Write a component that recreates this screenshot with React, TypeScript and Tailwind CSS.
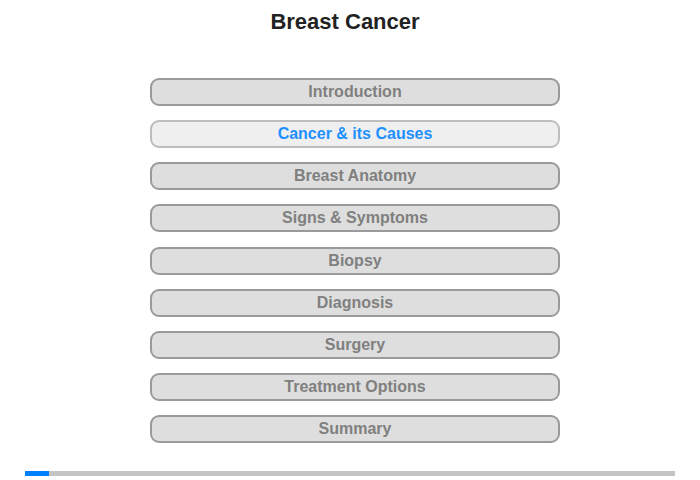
const topics = [
  "Introduction",
  "Cancer & its Causes",
  "Breast Anatomy",
  "Signs & Symptoms",
  "Biopsy",
  "Diagnosis",
  "Surgery",
  "Treatment Options",
  "Summary",
];

const active = 1;

export default function App() {
  return (
    <div
      className="w-[700px] h-[480px] bg-white flex flex-col items-center"
      style={{ fontFamily: '"Liberation Sans", Arial, sans-serif' }}
    >
      <h1 className="pt-[9px] pr-[10px] text-[22px] leading-[25px] font-bold text-[#222]">Breast Cancer</h1>

      <div className="mt-[44px] pl-[10px] flex flex-col gap-[14.15px]">
        {topics.map((t, i) => (
          <button
            key={t}
            className={
              i === active
                ? "w-[410px] h-[28px] rounded-[9px] border-2 border-[#bdbdbd] bg-[#efefef] text-[16px] font-bold text-[#1e90ff]"
                : "w-[410px] h-[28px] rounded-[9px] border-2 border-[#9a9a9a] bg-[#dedede] text-[16px] font-bold text-[#808080]"
            }
          >
            {t}
          </button>
        ))}
      </div>

      <div className="mt-auto mb-[4px] w-[650px] h-[5px] bg-[#c4c4c4] flex">
        <div className="w-[24px] h-full bg-[#0080ff]" />
      </div>
    </div>
  );
}
